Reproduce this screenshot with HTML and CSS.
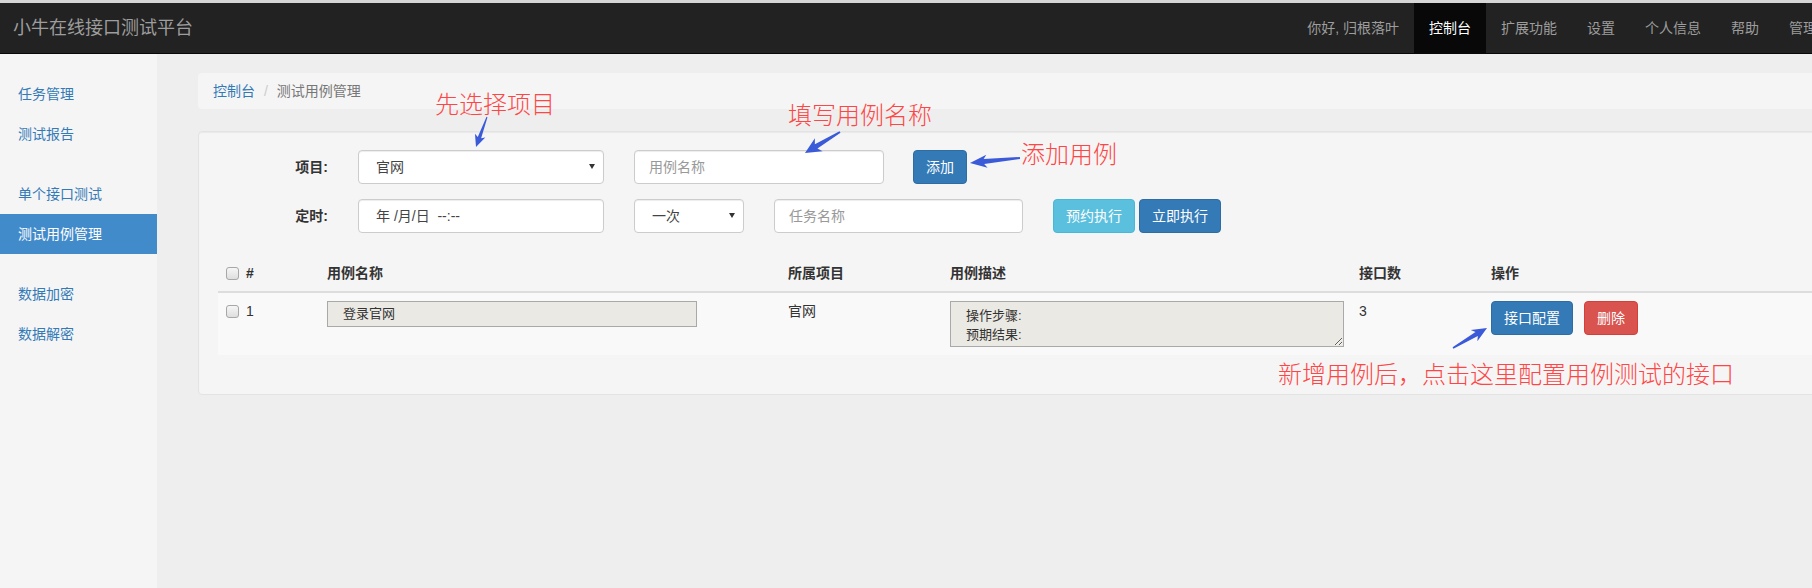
FILE: index.html
```html
<!DOCTYPE html>
<html lang="zh-CN">
<head>
<meta charset="utf-8">
<title>测试用例管理 - 小牛在线接口测试平台</title>
<link rel="stylesheet" href="styles.css">
</head>
<body>
<div class="page">
  <div class="topstrip"></div>
  <header class="navbar">
    <a class="brand">小牛在线接口测试平台</a>
    <ul class="topnav">
      <li><a>你好, 归根落叶</a></li>
      <li class="active"><a>控制台</a></li>
      <li><a>扩展功能</a></li>
      <li><a>设置</a></li>
      <li><a>个人信息</a></li>
      <li><a>帮助</a></li>
      <li><a>管理员</a></li>
    </ul>
  </header>
  <div class="layout">
    <aside class="sidebar">
      <ul class="side-nav">
        <li><a>任务管理</a></li>
        <li><a>测试报告</a></li>
      </ul>
      <ul class="side-nav">
        <li><a>单个接口测试</a></li>
        <li class="active"><a>测试用例管理</a></li>
      </ul>
      <ul class="side-nav">
        <li><a>数据加密</a></li>
        <li><a>数据解密</a></li>
      </ul>
    </aside>
    <main class="main">
      <ol class="breadcrumb">
        <li><a>控制台</a></li>
        <li class="current">测试用例管理</li>
      </ol>
      <section class="well">
        <div class="form-row">
          <label class="form-label">项目:</label>
          <div class="control select w246"><span>官网</span><span class="caret"></span></div>
          <div class="control placeholder w250">用例名称</div>
          <button class="btn btn-primary btn-add">添加</button>
        </div>
        <div class="form-row last">
          <label class="form-label">定时:</label>
          <div class="control datetime w246">年 /月/日  --:--</div>
          <div class="control select w110"><span>一次</span><span class="caret"></span></div>
          <div class="control placeholder w249">任务名称</div>
          <div class="btn-group">
            <button class="btn btn-info">预约执行</button>
            <button class="btn btn-primary">立即执行</button>
          </div>
        </div>
        <table class="table">
          <colgroup>
            <col class="c1"><col class="c2"><col class="c3"><col class="c4"><col class="c5"><col>
          </colgroup>
          <thead>
            <tr>
              <th><span class="cb"></span>#</th>
              <th>用例名称</th>
              <th>所属项目</th>
              <th>用例描述</th>
              <th>接口数</th>
              <th>操作</th>
            </tr>
          </thead>
          <tbody>
            <tr>
              <td><span class="cb"></span>1</td>
              <td><div class="name-box">登录官网</div></td>
              <td>官网</td>
              <td><textarea class="desc" readonly>操作步骤:
预期结果:</textarea></td>
              <td>3</td>
              <td>
                <div class="ops">
                  <button class="btn btn-primary">接口配置</button>
                  <button class="btn btn-danger">删除</button>
                </div>
              </td>
            </tr>
          </tbody>
        </table>
      </section>
    </main>
  </div>

  <div class="note n1">先选择项目</div>
  <div class="note n2">填写用例名称</div>
  <div class="note n3">添加用例</div>
  <div class="note n4">新增用例后，点击这里配置用例测试的接口</div>
  <svg class="arrows" width="1846" height="588" viewBox="0 0 1846 588" xmlns="http://www.w3.org/2000/svg">
    <polygon points="487.47,117.17 481.13,138.23 485.29,137.62 476,147 474.97,133.84 477.75,136.99 486.53,116.83"/>
    <polygon points="840.52,132.86 817.44,148.45 822.59,151.20 805,153 814.87,138.32 814.86,144.15 839.49,131.14"/>
    <polygon points="1020.10,159.0 984.18,164.10 987.57,167.78 970,163 986.27,154.84 983.68,159.12 1019.90,157.0"/>
    <polygon points="1453.41,348.69 1477.83,336.06 1477.37,341.20 1487,328 1470.77,330.0 1475.49,332.10 1452.59,347.31"/>
  </svg>
</div>
</body>
</html>
```

FILE: styles.css
```css
* { box-sizing: border-box; }

html, body {
  margin: 0;
  padding: 0;
  overflow: hidden;
}

body {
  font-family: "Liberation Sans", "Noto Sans CJK SC", sans-serif;
  font-size: 14px;
  line-height: 20px;
  color: #333;
  background: #eee;
}

a { cursor: pointer; text-decoration: none; }

.page {
  position: relative;
  width: 1846px;
  min-height: 588px;
  display: flex;
  flex-direction: column;
}

.topstrip {
  height: 3px;
  background: #d6d6d6;
}

/* ---------- top navbar ---------- */
.navbar {
  display: flex;
  height: 51px;
  background: #222;
  border-bottom: 1px solid #080808;
}

.brand {
  padding: 15px 13px;
  font-size: 18px;
  line-height: 20px;
  color: #9d9d9d;
}

.topnav {
  list-style: none;
  margin: 0 0 0 auto;
  padding: 0;
  display: flex;
}

.topnav a {
  display: block;
  padding: 15px;
  line-height: 20px;
  color: #9d9d9d;
}

.topnav .active a {
  background: #080808;
  color: #fff;
}

/* ---------- layout ---------- */
.layout {
  flex: 1;
  display: flex;
}

.sidebar {
  width: 157px;
  flex-shrink: 0;
  background: #f5f5f5;
  padding-top: 20px;
}

.side-nav {
  list-style: none;
  margin: 0 0 20px;
  padding: 0;
}

.side-nav a {
  display: block;
  padding: 10px 18px;
  line-height: 20px;
  color: #337ab7;
}

.side-nav .active a {
  background: #428bca;
  color: #fff;
}

.main {
  flex: 1;
  padding: 19px 0 0 41px;
}

/* ---------- breadcrumb ---------- */
.breadcrumb {
  list-style: none;
  display: flex;
  margin: 0 0 22px;
  padding: 8px 15px;
  background: #f5f5f5;
  border-radius: 4px;
}

.breadcrumb a { color: #337ab7; }

.breadcrumb li + li { margin-left: 4px; }

.breadcrumb li + li::before {
  content: "/\00a0";
  padding: 0 5px;
  color: #ccc;
}

.breadcrumb .current { color: #777; }

/* ---------- well / form ---------- */
.well {
  background: #f5f5f5;
  border: 1px solid #e3e3e3;
  border-radius: 4px;
  padding: 18px 19px 19px;
  box-shadow: inset 0 1px 1px rgba(0, 0, 0, 0.05);
}

.form-row {
  display: flex;
  align-items: center;
  gap: 30px;
  margin-bottom: 15px;
}

.form-row.last { margin-bottom: 22px; }

.form-label {
  width: 110px;
  text-align: right;
  font-weight: bold;
  color: #333;
}

.control {
  height: 34px;
  display: flex;
  align-items: center;
  padding: 0 12px 0 14px;
  border: 1px solid #ccc;
  border-radius: 4px;
  background: #fff;
  color: #444;
  box-shadow: inset 0 1px 1px rgba(0, 0, 0, 0.075);
  white-space: pre;
}

.select {
  justify-content: space-between;
  padding: 0 8px 0 17px;
}

.datetime { padding-left: 17px; }

.placeholder { color: #999; }

.caret {
  width: 0;
  height: 0;
  border-left: 3px solid transparent;
  border-right: 3px solid transparent;
  border-top: 5px solid #333;
  margin-top: -2px;
}

.w246 { width: 246px; }
.w250 { width: 250px; }
.w249 { width: 249px; }
.w110 { width: 110px; }

.btn-add { margin-left: -1px; }

.btn-group {
  display: flex;
  gap: 4px;
}

.btn {
  height: 34px;
  padding: 0 12px;
  font-family: inherit;
  font-size: 14px;
  line-height: 20px;
  color: #fff;
  border: 1px solid transparent;
  border-radius: 4px;
  white-space: nowrap;
}

.btn-primary { background: #337ab7; border-color: #2e6da4; }
.btn-info { background: #5bc0de; border-color: #46b8da; }
.btn-danger { background: #d9534f; border-color: #d43f3a; }

/* ---------- table ---------- */
.table {
  width: 100%;
  table-layout: fixed;
  border-collapse: collapse;
  margin: 0 0 20px;
}

.c1 { width: 101px; }
.c2 { width: 461px; }
.c3 { width: 162px; }
.c4 { width: 409px; }
.c5 { width: 132px; }

.table th {
  text-align: left;
  padding: 8px;
  line-height: 20px;
  font-weight: bold;
  border-bottom: 2px solid #ddd;
  vertical-align: bottom;
}

.table td {
  padding: 8px;
  line-height: 20px;
  vertical-align: top;
}

.table tbody tr { background: #f9f9f9; }

.cb {
  display: inline-block;
  width: 13px;
  height: 13px;
  margin-right: 7px;
  vertical-align: -2px;
  border: 1px solid #a7a7a7;
  border-radius: 3px;
  background: linear-gradient(#f6f6f6, #dedede);
}

.name-box {
  width: 370px;
  height: 26px;
  padding: 0 15px;
  border: 1px solid #a9a9a9;
  background: #ebe9e3;
  font-size: 13px;
  line-height: 24px;
  color: #333;
}

.desc {
  display: block;
  width: 394px;
  height: 46px;
  margin: 0;
  padding: 4px 15px 0;
  border: 1px solid #a9a9a9;
  background: #ebe9e3;
  font-family: "Liberation Sans", "Noto Sans CJK SC", sans-serif;
  font-size: 13px;
  line-height: 19px;
  color: #333;
  resize: both;
  overflow: hidden;
}

.ops {
  display: flex;
  gap: 11px;
}

/* ---------- annotations ---------- */
.note {
  position: absolute;
  font-family: "Noto Sans CJK SC", sans-serif;
  font-size: 24px;
  font-weight: 300;
  line-height: 24px;
  color: #ff4646;
  white-space: nowrap;
}

.n1 { left: 435px; top: 91px; }
.n2 { left: 788px; top: 102px; }
.n3 { left: 1021px; top: 141px; }
.n4 { left: 1278px; top: 361px; }

.arrows {
  position: absolute;
  left: 0;
  top: 0;
  pointer-events: none;
  fill: #3a5ad8;
}
```
